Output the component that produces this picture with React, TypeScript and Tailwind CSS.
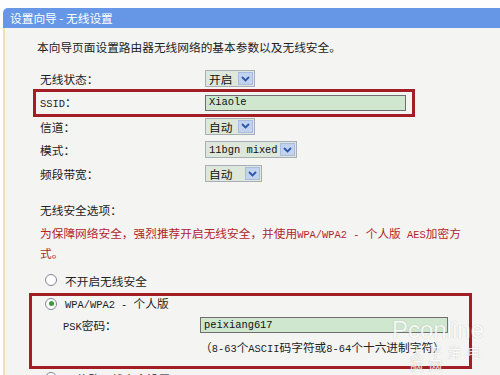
import type { ReactNode } from "react"

// half-width latin, like the router page's SimSun latin glyphs
const M = ({ children }: { children: ReactNode }) => (
  <span className="font-['Liberation_Mono',monospace] text-[10.4px]">{children}</span>
)

function Select({ value, w }: { value: ReactNode; w: string }) {
  return (
    <div className={`flex h-[17px] border border-[#a7aeb8] bg-[#dde8db] ${w}`}>
      <div className="flex flex-1 items-center pl-[3px] leading-none text-[#111]">{value}</div>
      <div className="my-[1px] mr-[1px] flex w-[15px] items-center justify-center border border-[#a9bcdf] bg-[#c2d2ef]">
        <svg width="9" height="6" viewBox="0 0 9 6">
          <path d="M1 1l3.5 3.5L8 1" stroke="#2b57a8" strokeWidth="1.8" fill="none" />
        </svg>
      </div>
    </div>
  )
}

function TextBox({ value, w }: { value: string; w: string }) {
  return (
    <div className={`flex h-[16px] items-center border border-[#6e6e6e] bg-[#cfe6cf] pl-[3px] leading-none text-[#111] ${w}`}>
      <M>{value}</M>
    </div>
  )
}

function Radio({ checked }: { checked?: boolean }) {
  return (
    <span className="flex h-[12px] w-[12px] flex-shrink-0 items-center justify-center rounded-full border border-[#7d8893] bg-white">
      {checked && <span className="h-[5px] w-[5px] rounded-full bg-[#3c9a3c]" />}
    </span>
  )
}

function Row({ label, children }: { label: ReactNode; children: ReactNode }) {
  return (
    <div className="ml-[35px] flex h-[23.6px] items-center">
      <div className="w-[165px]">{label}</div>
      {children}
    </div>
  )
}

export default function App() {
  return (
    <div className="relative h-[375px] w-[500px] overflow-hidden bg-[#fdfdfd] pt-[8px] pl-[3px] font-['Noto_Sans_CJK_SC',sans-serif] text-[11.7px] text-[#222]">
      {/* title bar */}
      <div className="flex h-[20px] items-center rounded-tl-[5px] bg-[#6597e6] pl-[7px] text-white">
        设置向导 - 无线设置
      </div>

      <div className="h-[347px] border-l-2 border-[#efe2bb] bg-[#f4f4f3]">
        <div className="ml-[32px] pt-[11px] leading-[16px]">本向导页面设置路由器无线网络的基本参数以及无线安全。</div>

        <div className="mt-[12px]">
          <Row label="无线状态：">
            <Select value="开启" w="w-[50px]" />
          </Row>

          <div className="relative z-10 -my-[2px] ml-[28px] flex h-[28px] w-[382px] items-center border-[3px] border-[#a31d24] pl-[4px]">
            <div className="w-[165px]">
              <M>SSID</M>：
            </div>
            <TextBox value="Xiaole" w="w-[201px]" />
          </div>

          <Row label="信道：">
            <Select value="自动" w="w-[50px]" />
          </Row>
          <Row label="模式：">
            <Select value={<M>11bgn mixed</M>} w="w-[92px]" />
          </Row>
          <Row label="频段带宽：">
            <Select value="自动" w="w-[57px]" />
          </Row>
        </div>

        <div className="ml-[35px] mt-[17px] leading-[16px]">无线安全选项：</div>
        <div className="ml-[35px] mt-[6px] leading-[18px] text-[#b1262c]">
          为保障网络安全，强烈推荐开启无线安全，并使用<M>WPA/WPA2 - </M>个人版<M> AES</M>加密方
          <br />
          式。
        </div>

        <div className="ml-[40px] mt-[8px] flex h-[20px] items-center gap-[8px]">
          <Radio />
          <span>不开启无线安全</span>
        </div>

        <div className="ml-[24px] mt-[3px] h-[76px] w-[443px] border-[3px] border-[#a31d24] pl-[13px]">
          <div className="flex h-[15px] items-center gap-[8px]">
            <Radio checked />
            <span>
              <M>WPA/WPA2 - </M>个人版
            </span>
          </div>
          <div className="mt-[5px] flex h-[18px] items-center">
            <div className="w-[155px] pl-[18px]">
              <M>PSK</M>密码：
            </div>
            <TextBox value="peixiang617" w="w-[248px]" />
          </div>
          <div className="mt-[5px] h-[16px] pl-[155px] leading-[16px]">
            （<M>8-63</M>个<M>ASCII</M>码字符或<M>8-64</M>个十六进制字符）
          </div>
        </div>

        <div className="ml-[40px] mt-[2px] flex h-[14px] items-center gap-[8px]">
          <Radio />
          <span>不修改无线安全设置</span>
        </div>
      </div>

      {/* watermark */}
      <div className="pointer-events-none absolute left-[392px] top-[318px] leading-none text-white opacity-75 [text-shadow:0_0_1px_#9a9a9a]">
        <div className="font-['Liberation_Sans',sans-serif] text-[24px]">Pconline</div>
        <div className="ml-[18px] mt-[3px] text-[13px] tracking-[6px]">太平洋电脑网</div>
      </div>
    </div>
  )
}
